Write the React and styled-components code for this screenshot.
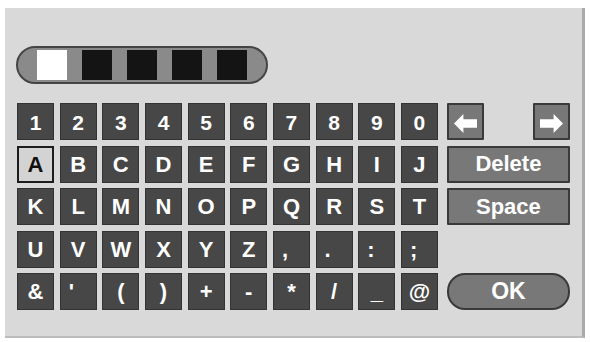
import React from "react";
import styled, { createGlobalStyle } from "styled-components";

const Global = createGlobalStyle`
  html, body { margin: 0; padding: 0; background: #ffffff; }
  body { font-family: "Liberation Sans", Arial, sans-serif; }
`;

const Panel = styled.div`
  margin: 8px 0 0 5px;
  width: 580px;
  height: 330px;
  box-sizing: border-box;
  background: #d9d9d9;
  border-right: 3px solid #a9a9a9;
  border-bottom: 2px solid #bcbcbc;
  padding: 38px 0 0 11px;
  display: flex;
  flex-direction: column;
`;

const Pill = styled.div`
  width: 252px;
  height: 38px;
  box-sizing: border-box;
  border: 2px solid #454545;
  border-radius: 19px;
  background: #8a8a8a;
  display: flex;
  align-items: center;
  gap: 15px;
  padding-left: 19px;
`;

const Slot = styled.div`
  width: 30px;
  height: 30px;
  background: ${(p) => (p.$filled ? "#ffffff" : "#141414")};
`;

const Keyboard = styled.div`
  margin-top: 19px;
  margin-left: 1px;
  display: flex;
  gap: 9px;
`;

const Grid = styled.div`
  display: grid;
  grid-template-columns: repeat(10, 37px);
  grid-auto-rows: 37px;
  column-gap: 5.67px;
  row-gap: 5.6px;
`;

const Key = styled.div`
  box-sizing: border-box;
  background: ${(p) => (p.$selected ? "#d3d3d3" : "#474747")};
  border: ${(p) => (p.$selected ? "2px solid #1c1c1c" : "1px solid #333333")};
  color: ${(p) => (p.$selected ? "#111111" : "#ffffff")};
  font-weight: bold;
  font-size: ${(p) => (p.$digit ? "21px" : "22px")};
  display: flex;
  align-items: center;
  justify-content: ${(p) => (p.$left ? "flex-start" : "center")};
  padding-left: ${(p) => (p.$left ? "8px" : "0")};
  padding-top: 1px;
  line-height: 1;
`;

const Side = styled.div`
  width: 123px;
  display: grid;
  grid-template-rows: repeat(5, 37px);
  row-gap: 5.6px;
`;

const ArrowRow = styled.div`
  display: flex;
  justify-content: space-between;
`;

const GrayKey = styled.div`
  box-sizing: border-box;
  width: ${(p) => (p.$square ? "37px" : "100%")};
  height: 37px;
  background: #787878;
  border: 2px solid #3a3a3a;
  border-radius: ${(p) => (p.$round ? "18px" : "1px")};
  color: #ffffff;
  font-weight: bold;
  font-size: 22px;
  display: flex;
  align-items: center;
  justify-content: center;
  line-height: 1;
`;

const OkKey = styled(GrayKey)`
  font-size: 23px;
`;

const Arrow = ({ dir }) => (
  <svg width="23" height="19" viewBox="0 0 22 18" style={{ marginTop: 3 }}>
    <path
      d="M0 9 L9 0 L9 5 L22 5 L22 13 L9 13 L9 18 Z"
      fill="#ffffff"
      transform={dir === "right" ? "translate(22 0) scale(-1 1)" : undefined}
    />
  </svg>
);

const rows = [
  ["1", "2", "3", "4", "5", "6", "7", "8", "9", "0"],
  ["A", "B", "C", "D", "E", "F", "G", "H", "I", "J"],
  ["K", "L", "M", "N", "O", "P", "Q", "R", "S", "T"],
  ["U", "V", "W", "X", "Y", "Z", ",", ".", ":", ";"],
  ["&", "'", "(", ")", "+", "-", "*", "/", "_", "@"],
];

const leftChars = new Set([",", ".", ":", ";", "'"]);

export default function App() {
  return (
    <>
      <Global />
      <Panel>
        <Pill>
          <Slot $filled />
          <Slot />
          <Slot />
          <Slot />
          <Slot />
        </Pill>
        <Keyboard>
          <Grid>
            {rows.map((row, ri) =>
              row.map((c) => (
                <Key
                  key={ri + c}
                  $digit={ri === 0}
                  $selected={c === "A"}
                  $left={leftChars.has(c)}
                >
                  {c}
                </Key>
              ))
            )}
          </Grid>
          <Side>
            <ArrowRow>
              <GrayKey $square>
                <Arrow dir="left" />
              </GrayKey>
              <GrayKey $square>
                <Arrow dir="right" />
              </GrayKey>
            </ArrowRow>
            <GrayKey>Delete</GrayKey>
            <GrayKey>Space</GrayKey>
            <div />
            <OkKey $round>OK</OkKey>
          </Side>
        </Keyboard>
      </Panel>
    </>
  );
}
